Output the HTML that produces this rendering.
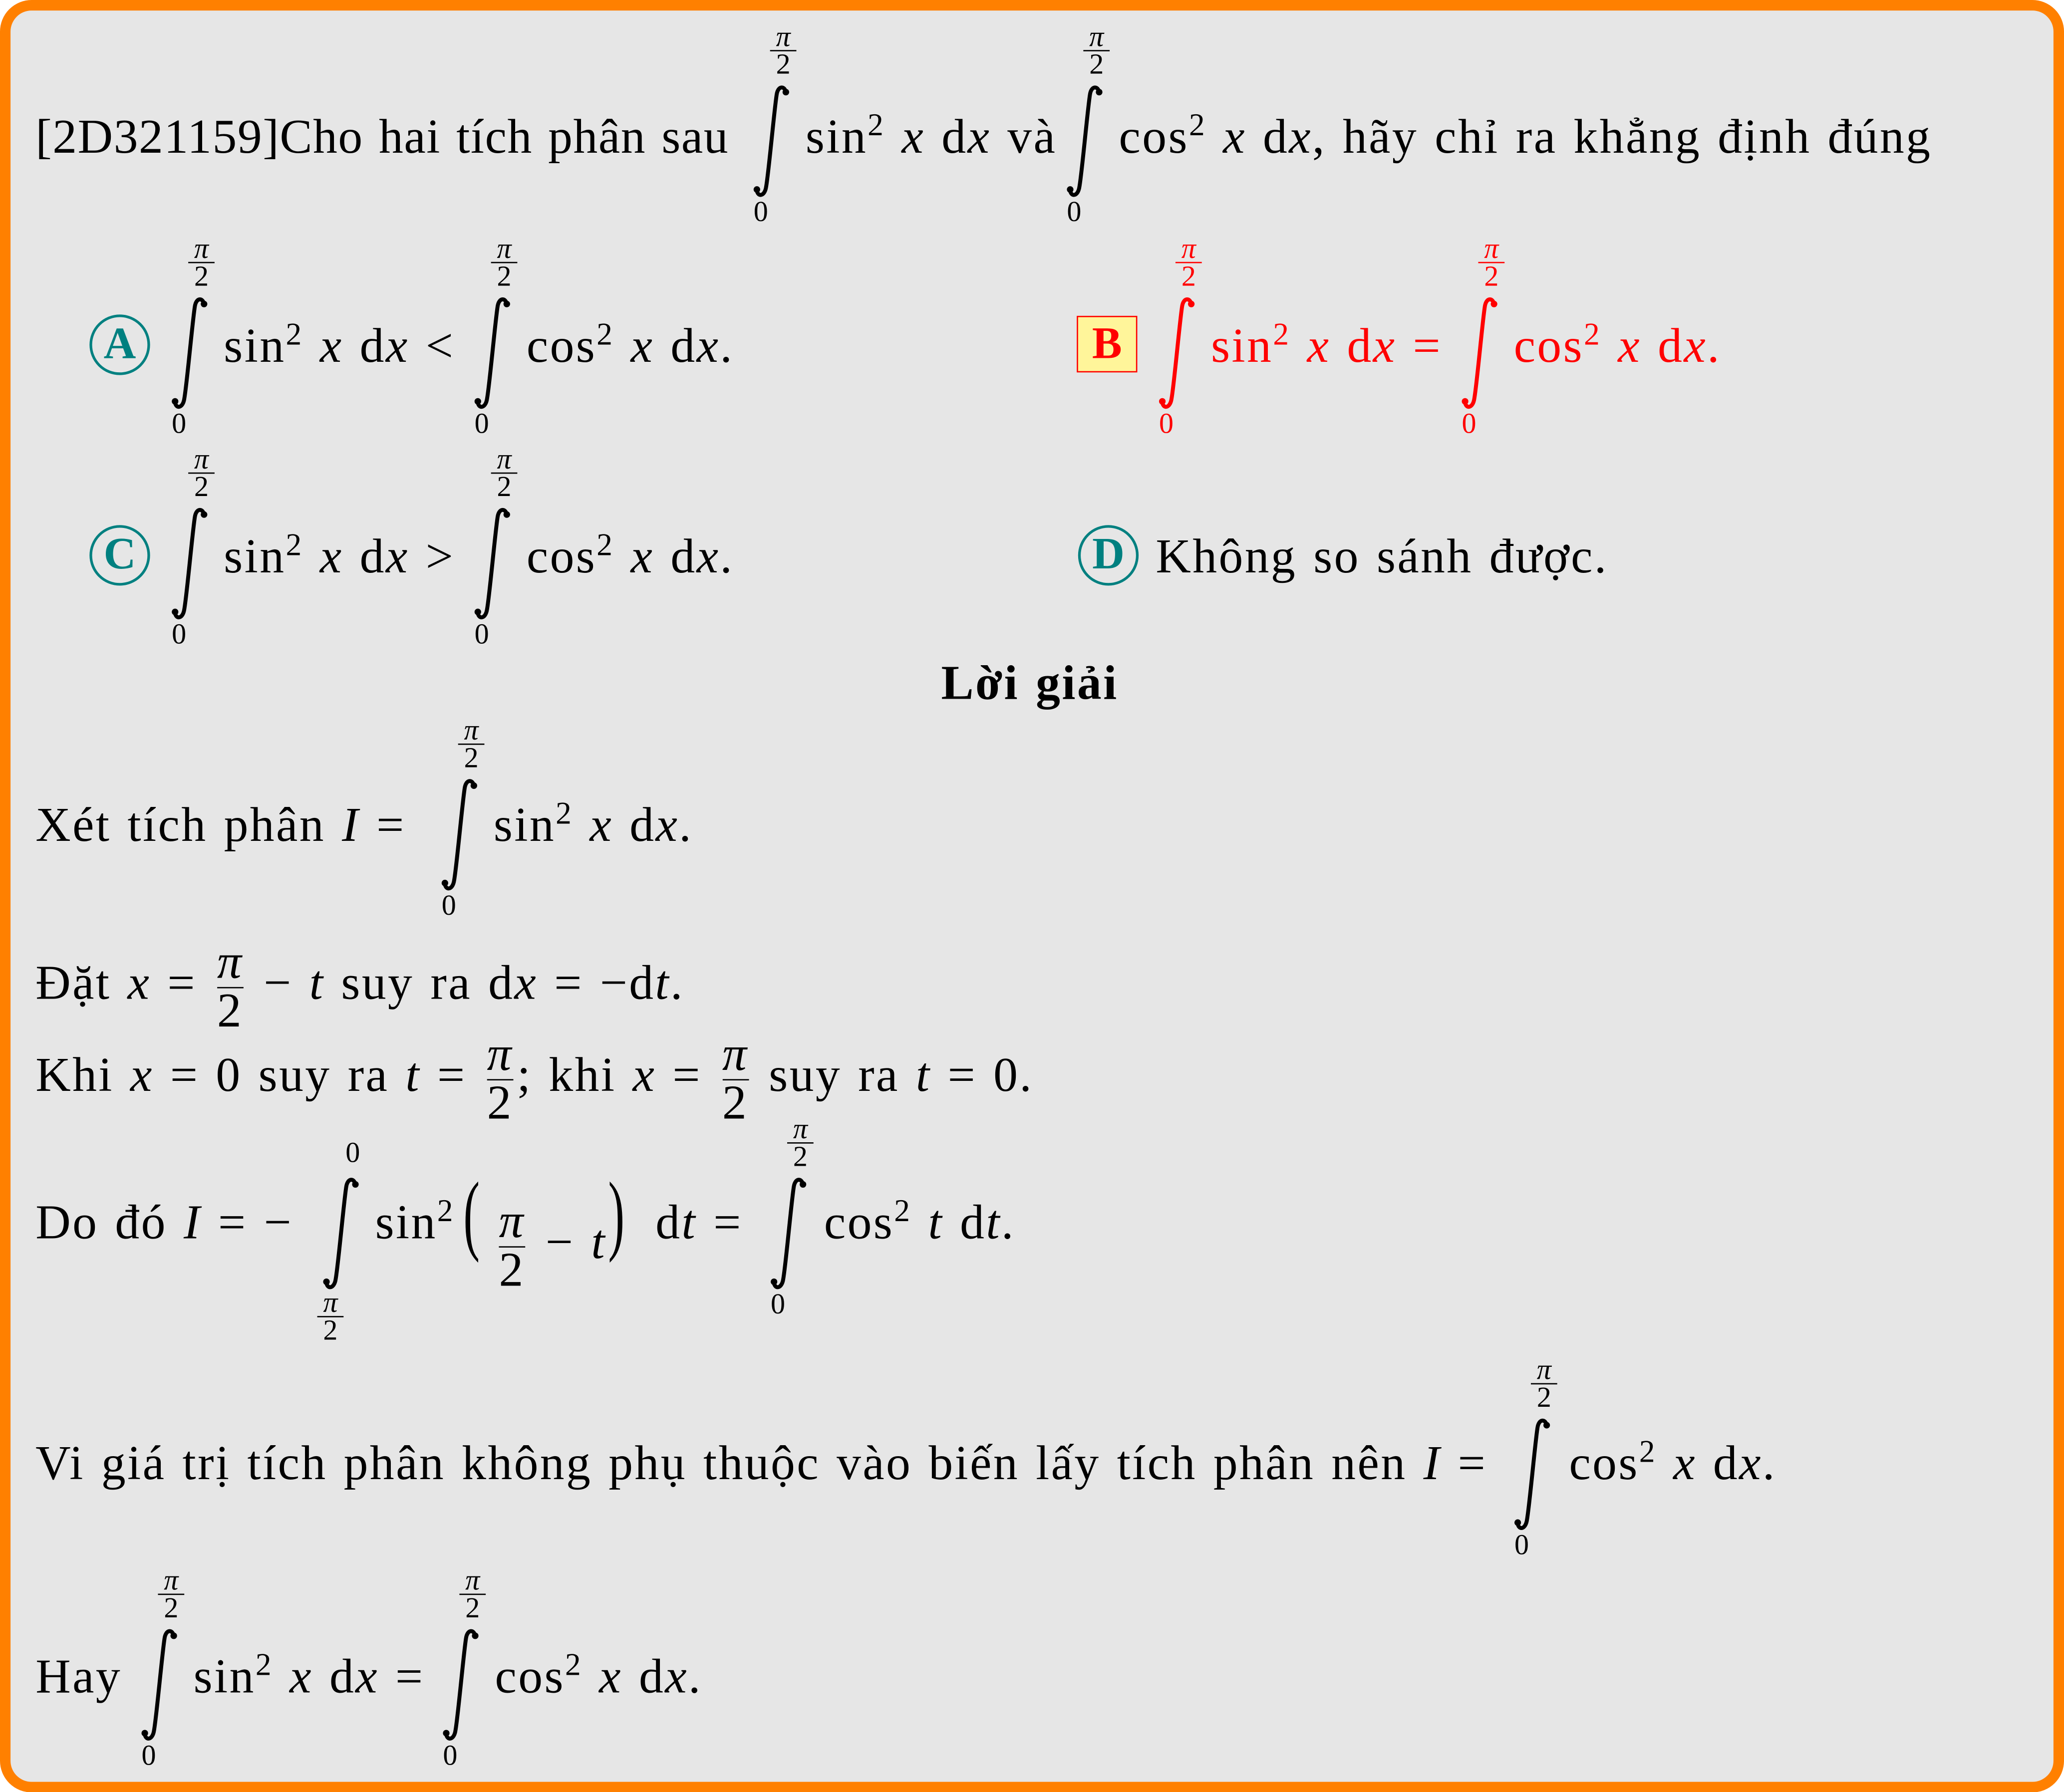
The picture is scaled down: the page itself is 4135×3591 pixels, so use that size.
<!DOCTYPE html>
<html><head><meta charset="utf-8">
<style>
html,body{margin:0;padding:0;background:#fff;}
#wrap{width:4135px;height:3591px;overflow:hidden;position:relative;background:#fff;}
#s{position:absolute;left:0;top:0;width:1568px;height:1362px;transform:scale(2.63712);transform-origin:0 0;}
#box{position:absolute;left:0;top:0;width:1552px;height:1346px;border:8px solid #ff8000;border-radius:24px;background:#e6e6e6;}
.t{position:absolute;font-family:"Liberation Serif",serif;font-size:37px;line-height:37px;white-space:nowrap;color:#000;letter-spacing:1.3px;word-spacing:2px}
.t i{font-style:italic}
sup{font-size:24px;line-height:0;vertical-align:0.55em}
.in{position:absolute;width:32px;height:88px;color:#000}
.lt{position:absolute;width:26px;font-family:"Liberation Serif",serif;font-size:22px;line-height:20px;text-align:center}
.lt span{display:block}
.lt span:first-child{font-style:italic;border-bottom:1.6px solid currentColor;margin:0 3px;line-height:21px}
.lb{position:absolute;width:24px;font-family:"Liberation Serif",serif;font-size:22px;line-height:20px;text-align:center}
.red{color:#ff0000}
.circ{position:absolute;width:42px;height:42px;border:2.5px solid #008080;border-radius:50%;color:#008080;font-family:"Liberation Serif",serif;font-weight:bold;font-size:34px;line-height:42px;text-align:center}
.fr{display:inline-block;vertical-align:middle;text-align:center;margin:0 3px}
.fr span{display:block;line-height:36px}
.fr span:first-child{font-style:italic;border-bottom:1.6px solid #000;}
</style></head><body>
<div id="wrap"><div id="s">
<svg width="0" height="0" style="position:absolute"><defs><g id="int"><path d="M27,7 C26,2 21,2 20,9 C18,22 14,68 12,79 C11,86 6,87 5,82" stroke="currentColor" stroke-width="3" fill="none" stroke-linecap="round"/><circle cx="27" cy="7" r="2.5" fill="currentColor"/><circle cx="5" cy="81" r="2.5" fill="currentColor"/></g></defs></svg>
<div id="box"></div>

<div class="t" style="left:27px;top:86px;letter-spacing:0.6px">[2D321159]Cho hai tích phân sau</div>
<svg class="in" style="left:570px;top:63px"><use href="#int"/></svg>
<div class="lt" style="left:582px;top:17px"><span>π</span><span>2</span></div>
<div class="lb" style="left:566px;top:151px">0</div>
<div class="t" style="left:612px;top:86px">sin<sup>2</sup> <i>x</i> d<i>x</i> và</div>
<svg class="in" style="left:808px;top:63px"><use href="#int"/></svg>
<div class="lt" style="left:820px;top:17px"><span>π</span><span>2</span></div>
<div class="lb" style="left:804px;top:151px">0</div>
<div class="t" style="left:850px;top:86px">cos<sup>2</sup> <i>x</i> d<i>x</i>, hãy chỉ ra khẳng định đúng</div>

<div class="circ" style="left:68px;top:239px">A</div>
<svg class="in" style="left:128px;top:224px"><use href="#int"/></svg>
<div class="lt" style="left:140px;top:178px"><span>π</span><span>2</span></div>
<div class="lb" style="left:124px;top:312px">0</div>
<div class="t" style="left:170px;top:245px">sin<sup>2</sup> <i>x</i> d<i>x</i> &lt;</div>
<svg class="in" style="left:358px;top:224px"><use href="#int"/></svg>
<div class="lt" style="left:370px;top:178px"><span>π</span><span>2</span></div>
<div class="lb" style="left:354px;top:312px">0</div>
<div class="t" style="left:400px;top:245px">cos<sup>2</sup> <i>x</i> d<i>x</i>.</div>

<div style="position:absolute;left:818px;top:240px;width:44px;height:41px;background:#fff59a;border:1.5px solid #ff0000;color:#ff0000;font-family:'Liberation Serif',serif;font-weight:bold;font-size:34px;line-height:42px;text-align:center">B</div>
<svg class="in red" style="left:878px;top:224px"><use href="#int"/></svg>
<div class="lt red" style="left:890px;top:178px"><span>π</span><span>2</span></div>
<div class="lb red" style="left:874px;top:312px">0</div>
<div class="t red" style="left:920px;top:245px">sin<sup>2</sup> <i>x</i> d<i>x</i> =</div>
<svg class="in red" style="left:1108px;top:224px"><use href="#int"/></svg>
<div class="lt red" style="left:1120px;top:178px"><span>π</span><span>2</span></div>
<div class="lb red" style="left:1104px;top:312px">0</div>
<div class="t red" style="left:1150px;top:245px">cos<sup>2</sup> <i>x</i> d<i>x</i>.</div>

<div class="circ" style="left:68px;top:399px">C</div>
<svg class="in" style="left:128px;top:384px"><use href="#int"/></svg>
<div class="lt" style="left:140px;top:338px"><span>π</span><span>2</span></div>
<div class="lb" style="left:124px;top:472px">0</div>
<div class="t" style="left:170px;top:405px">sin<sup>2</sup> <i>x</i> d<i>x</i> &gt;</div>
<svg class="in" style="left:358px;top:384px"><use href="#int"/></svg>
<div class="lt" style="left:370px;top:338px"><span>π</span><span>2</span></div>
<div class="lb" style="left:354px;top:472px">0</div>
<div class="t" style="left:400px;top:405px">cos<sup>2</sup> <i>x</i> d<i>x</i>.</div>

<div class="circ" style="left:819px;top:399px">D</div>
<div class="t" style="left:878px;top:405px">Không so sánh được.</div>

<div class="t" style="left:715px;top:501px;font-weight:bold">Lời giải</div>

<div class="t" style="left:27px;top:609px">Xét tích phân <i>I</i> =</div>
<svg class="in" style="left:333px;top:590px"><use href="#int"/></svg>
<div class="lt" style="left:345px;top:544px"><span>π</span><span>2</span></div>
<div class="lb" style="left:329px;top:678px">0</div>
<div class="t" style="left:375px;top:609px">sin<sup>2</sup> <i>x</i> d<i>x</i>.</div>

<div class="t" style="left:27px;top:714px">Đặt <i>x</i> = <span class="fr"><span>π</span><span>2</span></span> − <i>t</i> suy ra d<i>x</i> = −d<i>t</i>.</div>
<div class="t" style="left:27px;top:784px">Khi <i>x</i> = 0 suy ra <i>t</i> = <span class="fr"><span>π</span><span>2</span></span>; khi <i>x</i> = <span class="fr"><span>π</span><span>2</span></span> suy ra <i>t</i> = 0.</div>

<div class="t" style="left:27px;top:911px">Do đó <i>I</i> = −</div>
<svg class="in" style="left:243px;top:893px"><use href="#int"/></svg>
<div class="lb" style="left:256px;top:866px">0</div>
<div class="lt" style="left:238px;top:979px"><span>π</span><span>2</span></div>
<div class="t" style="left:285px;top:911px">sin<sup>2</sup></div>
<div class="t" style="left:352px;top:888px;font-size:68px;line-height:68px;transform:scaleX(0.55);transform-origin:0 0">(</div>
<div class="t" style="left:376px;top:911px"><span class="fr"><span>π</span><span>2</span></span> − <i>t</i></div>
<div class="t" style="left:462px;top:888px;font-size:68px;line-height:68px;transform:scaleX(0.55);transform-origin:0 0">)</div>
<div class="t" style="left:498px;top:911px">d<i>t</i> =</div>
<svg class="in" style="left:583px;top:893px"><use href="#int"/></svg>
<div class="lt" style="left:595px;top:847px"><span>π</span><span>2</span></div>
<div class="lb" style="left:579px;top:981px">0</div>
<div class="t" style="left:626px;top:911px">cos<sup>2</sup> <i>t</i> d<i>t</i>.</div>

<div class="t" style="left:27px;top:1094px">Vi giá trị tích phân không phụ thuộc vào biến lấy tích phân nên <i>I</i> =</div>
<svg class="in" style="left:1148px;top:1076px"><use href="#int"/></svg>
<div class="lt" style="left:1160px;top:1030px"><span>π</span><span>2</span></div>
<div class="lb" style="left:1144px;top:1164px">0</div>
<div class="t" style="left:1192px;top:1094px">cos<sup>2</sup> <i>x</i> d<i>x</i>.</div>

<div class="t" style="left:27px;top:1256px">Hay</div>
<svg class="in" style="left:105px;top:1236px"><use href="#int"/></svg>
<div class="lt" style="left:117px;top:1190px"><span>π</span><span>2</span></div>
<div class="lb" style="left:101px;top:1324px">0</div>
<div class="t" style="left:147px;top:1256px">sin<sup>2</sup> <i>x</i> d<i>x</i> =</div>
<svg class="in" style="left:334px;top:1236px"><use href="#int"/></svg>
<div class="lt" style="left:346px;top:1190px"><span>π</span><span>2</span></div>
<div class="lb" style="left:330px;top:1324px">0</div>
<div class="t" style="left:376px;top:1256px">cos<sup>2</sup> <i>x</i> d<i>x</i>.</div>

</div></div>
</body></html>
